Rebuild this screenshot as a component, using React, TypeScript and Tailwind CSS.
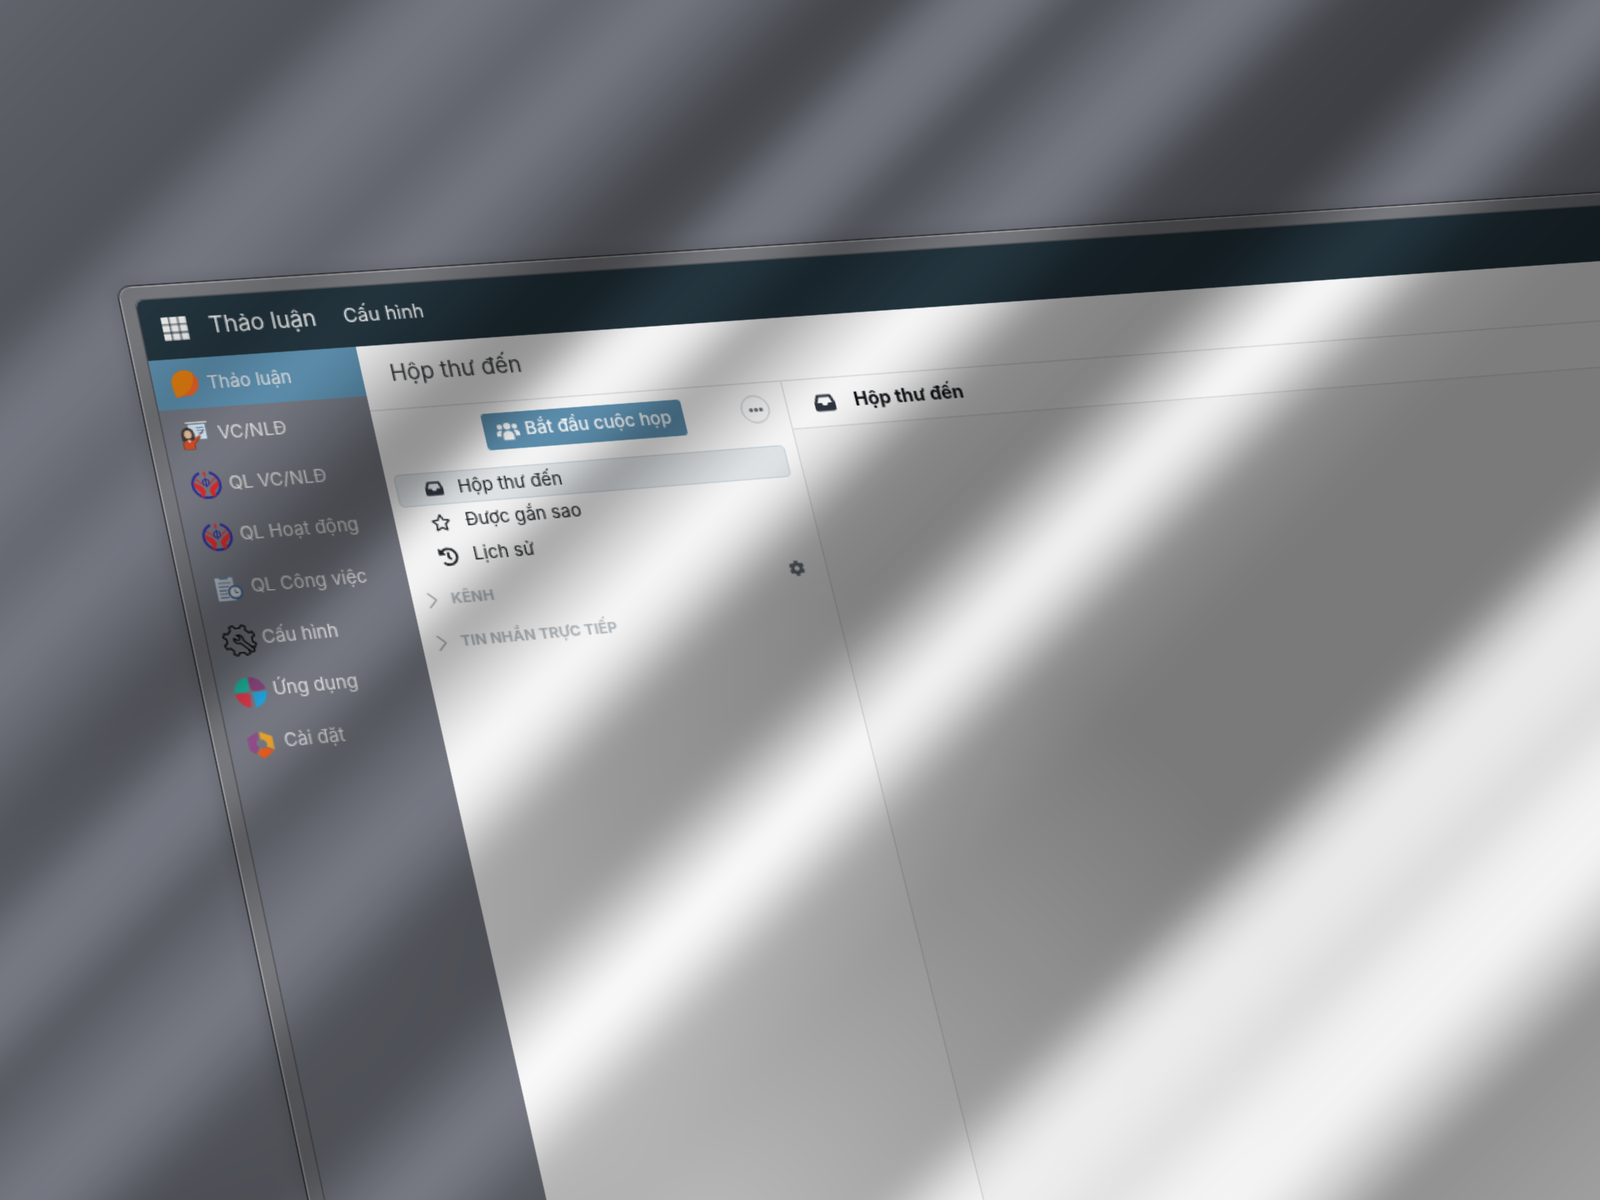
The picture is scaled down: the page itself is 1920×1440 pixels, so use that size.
import React from "react";
import { FaRegStar, FaHistory, FaCog, FaEllipsisH } from "react-icons/fa";
import { FiChevronRight } from "react-icons/fi";

const Grid = () => (
  <svg width="20" height="20" viewBox="0 0 20 20" fill="#f6f6f6">
    {[1, 7.2, 13.4].map((y) =>
      [1, 7.2, 13.4].map((x) => <rect key={`${x}-${y}`} x={x} y={y} width="5.4" height="5.4" rx="0.5" />)
    )}
  </svg>
);

const Inbox = ({ size }: { size: number }) => (
  <svg width={size} height={size} viewBox="0 0 16 16" className="shrink-0">
    <path
      fillRule="evenodd"
      fill="#2f3640"
      d="M3.300 1.500h9.400c.5 0 .9.300 1.100.7L16 8v4.500a2 2 0 0 1-2 2H2a2 2 0 0 1-2-2V8l2.200-5.800c.2-.4.600-.7 1.100-.7zM4 3.500L2.300 8h3.200l1.100 2h2.800l1.100-2h3.200L12 3.500z"
    />
  </svg>
);

const Users = () => (
  <svg width="17" height="16" viewBox="0 0 20 18" fill="#ffffff" className="shrink-0">
    <circle cx="10" cy="5" r="3.200" />
    <circle cx="3.500" cy="5.500" r="2.400" />
    <circle cx="16.500" cy="5.500" r="2.400" />
    <path d="M5.300 17.500v-4c0-2.600 2.100-4.200 4.700-4.200s4.700 1.600 4.700 4.200v4z" />
    <path d="M0 14v-2.200c0-1.900 1.500-3.100 3.500-3.100.8 0 1.200.2 1.600.4-.9 1-1.400 2.300-1.400 3.900V14zM20 14v-2.200c0-1.900-1.500-3.100-3.500-3.100-.8 0-1.200.2-1.600.4.9 1 1.400 2.300 1.400 3.900V14z" />
  </svg>
);

const Bubble = () => (
  <svg width="21" height="22" viewBox="0 0 24 25">
    <path d="M3 24c-.8-3.500-1.500-8-1.500-12a10.800 11.200 0 1 1 10.800 11.200C9 23.200 6 23.700 3 24z" fill="#f0662a" />
    <path d="M3 24c-.8-3.500-1.500-8-1.500-12C1.500 6 6.300 1 12.300 1c2.800 0 5.300 1 7.200 2.800.8 7-2.500 17-16.500 20.200z" fill="#ee8512" />
  </svg>
);

const Teacher = () => (
  <svg width="22" height="22" viewBox="0 0 26 26">
    <rect x="6" y="1" width="19" height="2" fill="#e2e2e2" stroke="#555" strokeWidth="0.4" />
    <rect x="8" y="3" width="15" height="14" fill="#dbe9f5" stroke="#4a6c8c" strokeWidth="0.6" />
    <path d="M15 6.500h6M15 9h6M16 11.500h4" stroke="#6a97c0" strokeWidth="0.9" />
    <path d="M1.500 13c0-4.500 2.500-7 5.500-7s5.500 2.500 5.500 7v5h-11z" fill="#3f3a38" />
    <ellipse cx="7" cy="12" rx="3.200" ry="3.600" fill="#eec3a0" />
    <path d="M2 25v-4.500c0-2 2-3.500 5-3.500l3 .5 6-4 1 1.500-5.500 5.500V25z" fill="#d8502a" stroke="#6a2a18" strokeWidth="0.5" />
    <path d="M5.500 17h3.500l-1.700 2.500z" fill="#fff" />
    <path d="M16.500 13.500l4.500-5" stroke="#6a2a18" strokeWidth="0.7" />
  </svg>
);

const Emblem = () => (
  <svg width="23" height="23" viewBox="0 0 26 26">
    <path d="M9 2.700A11 11 0 1 0 17 2.700" fill="none" stroke="#2a2f9c" strokeWidth="1.900" />
    <path d="M13 1.500c1.200 1.600 1.600 3 0 5-1.600-2-1.200-3.400 0-5z" fill="#e52a2a" />
    <path d="M3 10l6.500 4.500 2 3.500-2 5.500-2.500-1 .5-3.500-4-4.500zM23 10l-6.500 4.500-2 3.500 2 5.500 2.500-1-.5-3.500 4-4.500z" fill="#e52a2a" />
    <path d="M5 7.500l5 4.500M21 7.500l-5 4.500" stroke="#e52a2a" strokeWidth="1" />
    <circle cx="13" cy="11" r="2.600" fill="none" stroke="#2a2f9c" strokeWidth="0.9" />
    <path d="M13 7v8" stroke="#2a2f9c" strokeWidth="0.9" />
  </svg>
);

const Clip = () => (
  <svg width="23" height="23" viewBox="0 0 26 26">
    <rect x="3" y="4" width="15" height="20" rx="1" fill="#c9d2dc" stroke="#5c6f86" strokeWidth="0.6" />
    <rect x="7" y="2" width="7" height="4" rx="1" fill="#6d7f94" />
    <path d="M5.500 9h10M5.500 12h8M5.500 15h6M5.500 18h6M5.500 21h7" stroke="#5c6f86" strokeWidth="0.9" />
    <circle cx="18" cy="17" r="6" fill="#3e6596" />
    <circle cx="18" cy="17" r="4.300" fill="#dfe5ea" />
    <path d="M18 14.500V17l2 1" stroke="#34465c" strokeWidth="0.8" fill="none" />
  </svg>
);

const gearOutline = (() => {
  const pt = (r: number, deg: number) => {
    const a = (deg * Math.PI) / 180;
    return `${(12 + r * Math.cos(a)).toFixed(2)} ${(12 + r * Math.sin(a)).toFixed(2)}`;
  };
  const parts: string[] = [];
  for (let i = 1; i <= 8; i++) {
    const a = 22.5 + i * 45;
    parts.push(pt(8.7, a - 13), pt(11, a - 7), pt(11, a + 7), pt(8.7, a + 13));
  }
  return "M" + parts.join("L");
})();

const GearWrench = () => (
  <svg width="25" height="25" viewBox="0 0 24 24" fill="none" stroke="#0b0b0b" strokeWidth="1.050" strokeLinecap="round" strokeLinejoin="round">
    <path d={gearOutline} />
    <path d="M8.300 10.300a3.200 3.200 0 0 0 4.100 3.700l5.800 6c.7.700 1.800.7 2.300 0 .5-.6.400-1.400-.2-2l-5.800-5.800a3.200 3.200 0 0 0-3.800-4l1.800 1.800-.3 1.500-1.500.3z" />
  </svg>
);

const Pinwheel = () => (
  <svg width="25" height="25" viewBox="0 0 28 28">
    <path d="M1.500 13.500C2 7 6.500 2.500 13 1.800c.7 3.500.7 7.500-.3 11.200-3.700.8-7.500 1-11.200.5z" fill="#1db59b" />
    <path d="M14.300 1.800C20.500 2 25 6.500 26.300 12.200c-3.500 1.200-7.500 1.500-11.300.8-.8-3.500-1.300-7.500-.7-11.200z" fill="#8c477f" />
    <path d="M1.600 15c3.700-.6 7.600-.6 11.200.2.500 3.600.2 7.500-.7 11.100C6.500 25.500 2.500 21 1.600 15z" fill="#dc3a4b" />
    <path d="M15 14.800c3.800-.6 7.700-.8 11.400-.8.200 6.500-4 11.600-10.800 12.500.5-3.800.3-8-.6-11.700z" fill="#24a7e2" />
  </svg>
);

const Hexa = () => (
  <svg width="20" height="22" viewBox="0 0 24 26">
    <path d="M11 1.500L1.500 6.500l.3 11 4.700 3 3.500-5.500a3.800 3.800 0 0 1-1.600-3.500c.2-1.500 1-2.500 2.500-3.200z" fill="#94508c" />
    <path d="M12.500 1.500L22.500 6.500v11.500l-6-3a3.800 3.800 0 0 0-.2-4.700 3.800 3.800 0 0 0-3.800-1.600z" fill="#f0a830" />
    <path d="M7.500 21l3.500-5.300a3.800 3.800 0 0 0 4.700 0l6.300 3.300L13 25z" fill="#f2601f" />
  </svg>
);

const items: { label: string; icon: React.ReactNode; active?: boolean; nudge: string }[] = [
  { label: "Thảo luận", icon: <Bubble />, active: true, nudge: "pt-[1px]" },
  { label: "VC/NLĐ", icon: <Teacher />, nudge: "pt-[1px]" },
  { label: "QL VC/NLĐ", icon: <Emblem />, nudge: "pb-[1px]" },
  { label: "QL Hoạt động", icon: <Emblem />, nudge: "pb-[1px]" },
  { label: "QL Công việc", icon: <Clip />, nudge: "pb-[1px]" },
  { label: "Cấu hình", icon: <GearWrench />, nudge: "pb-[1px]" },
  { label: "Ứng dụng", icon: <Pinwheel />, nudge: "pb-[1px]" },
  { label: "Cài đặt", icon: <Hexa />, nudge: "pb-[2px]" },
];

export default function App() {
  return (
    <div className="relative w-[1920px] h-[1440px] overflow-hidden bg-[#797c86] font-[Inter,sans-serif]">
      <div className="absolute left-0 top-0 w-[1700px] h-[1010px] origin-top-left [transform:matrix3d(1.695,-0.075,0,0.0000935,0.318,1.537,0,-0.0000766,0,0,1,0,162.5,361,0,1)_translate(-12px,-12px)] rounded-[10px] border border-[#35363a] bg-[#7b7c81] p-[11px] shadow-[inset_0_0_0_1px_#a9aaae,0_0_14px_rgba(0,0,0,0.15)]">
        <div className="flex h-full flex-col overflow-hidden rounded-t-[5px] bg-white shadow-[0_0_0_1px_#5a5b60]">
          <header className="flex h-[46px] shrink-0 items-center bg-[#243640] pl-[14px] text-[#f6f6f6]">
            <Grid />
            <span className="ml-[14.5px] pb-[1px] text-[16.6px]">Thảo luận</span>
            <span className="ml-[20px] pb-[2px] text-[14.2px]">Cấu hình</span>
          </header>
          <div className="flex min-h-0 flex-1">
            <aside className="w-[150px] shrink-0 bg-[#797c86]">
              {items.map((it) => (
                <div
                  key={it.label}
                  className={`flex h-[38.4px] items-center gap-[3.4px] pl-[9px] text-[13px] text-[#e6e6e6] ${it.active ? "bg-[#5f93b3]" : ""}`}
                >
                  <span className="flex w-[26px] shrink-0 items-center justify-center">{it.icon}</span>
                  <span className={it.nudge}>{it.label}</span>
                </div>
              ))}
            </aside>
            <main className="flex min-w-0 flex-1 flex-col">
              <div className="flex h-[50px] shrink-0 items-center border-b border-[#e2e4e6] pb-[5px] pl-[20.5px] text-[16.6px] text-[#3c4043]">
                Hộp thư đến
              </div>
              <div className="flex min-h-0 flex-1">
                <section className="relative w-[309px] shrink-0 border-r border-[#e0e2e4] text-[13.2px] text-[#212529]">
                  <div className="flex justify-center pt-[8px]">
                    <button className="flex h-[28px] w-[150px] items-center justify-center gap-[5px] rounded-[3px] bg-[#5f93b3] pr-[1px] text-[13.2px] font-medium text-white">
                      <Users />
                      Bắt đầu cuộc họp
                    </button>
                  </div>
                  <span className="absolute left-[273px] top-[9px] flex h-[22px] w-[22px] items-center justify-center rounded-full border border-[#ced4da] text-[11px] text-[#6c757d]">
                    <FaEllipsisH />
                  </span>
                  <ul className="mt-[13px]">
                    <li className="ml-[6px] flex h-[25px] w-[293px] items-center gap-[11px] rounded-[4px] border border-[#d3dee6] bg-[#e9edf0] pl-[19px]">
                      <span className="flex w-[14px] justify-center"><Inbox size={13} /></span>
                      Hộp thư đến
                    </li>
                    <li className="ml-[6px] mt-[1px] flex h-[24px] items-center gap-[11px] pl-[20px]">
                      <FaRegStar className="w-[14px] text-[14.5px]" />
                      Được gắn sao
                    </li>
                    <li className="ml-[6px] mt-[2px] flex h-[24px] items-center gap-[11px] pl-[20px]">
                      <FaHistory className="w-[14px] text-[14.5px]" />
                      Lịch sử
                    </li>
                  </ul>
                  <div className="mt-[9px] flex h-[20px] items-center gap-[9px] pl-[9px] pr-[16px] text-[11px] font-bold text-[#b5bbc0]">
                    <span className="flex w-[10px] justify-center">
                      <FiChevronRight size={21} strokeWidth={1.1} className="shrink-0 text-[#8a9198]" />
                    </span>
                    <span className="flex-1">KÊNH</span>
                    <FaCog className="text-[12px] text-[#6c757d]" />
                  </div>
                  <div className="mt-[12px] flex h-[20px] items-center gap-[9px] pl-[9px] text-[11px] font-bold text-[#b5bbc0]">
                    <span className="flex w-[10px] justify-center">
                      <FiChevronRight size={21} strokeWidth={1.1} className="shrink-0 text-[#8a9198]" />
                    </span>
                    <span>TIN NHẮN TRỰC TIẾP</span>
                  </div>
                </section>
                <section className="flex min-w-0 flex-1 flex-col bg-[#f9f9fa]">
                  <div className="flex h-[38px] shrink-0 items-center gap-[15px] border-b border-[#e2e4e6] bg-white pl-[21px] text-[14.4px] font-bold text-[#111418]">
                    <Inbox size={16} />
                    <span className="pb-[1px]">Hộp thư đến</span>
                  </div>
                </section>
              </div>
            </main>
          </div>
        </div>
      </div>
      <div className="pointer-events-none absolute inset-[-60px] mix-blend-multiply blur-[18px] bg-blend-screen bg-[radial-gradient(circle_800px_at_910px_1560px,#777777,#000000),radial-gradient(circle_750px_at_60px_1160px,#4d4d4d,#000000),linear-gradient(135deg,#cccccc_3.33%,#b8b8b8_8.89%,#b3b3b3_11.67%,#a8a8a8_14.44%,#d9d9d9_16.11%,#f7f7f7_18.06%,#ebebeb_20%,#cccccc_22.5%,#e6e6e6_24.17%,#f7f7f7_25.83%,#cccccc_28.33%,#8f8f8f_31.11%,#999999_33.33%,#e6e6e6_34.72%,#fafafa_36.11%,#e6e6e6_37.78%,#9e9e9e_39.44%,#d9d9d9_42.22%,#fcfcfc_44.17%,#e6e6e6_45.83%,#8c8c8c_48.33%,#808080_52.78%,#cccccc_55%,#ffffff_56.67%,#ebebeb_58.19%,#8f8f8f_60.56%,#7d7d7d_64.44%,#7d7d7d_72.78%,#cccccc_74.44%,#f2f2f2_76.11%,#ededed_78.33%,#e0e0e0_80.28%,#f7f7f7_82.5%,#fafafa_85.28%,#d1d1d1_87.5%,#949494_89.72%,#a3a3a3_96.67%)]" />
    </div>
  );
}
